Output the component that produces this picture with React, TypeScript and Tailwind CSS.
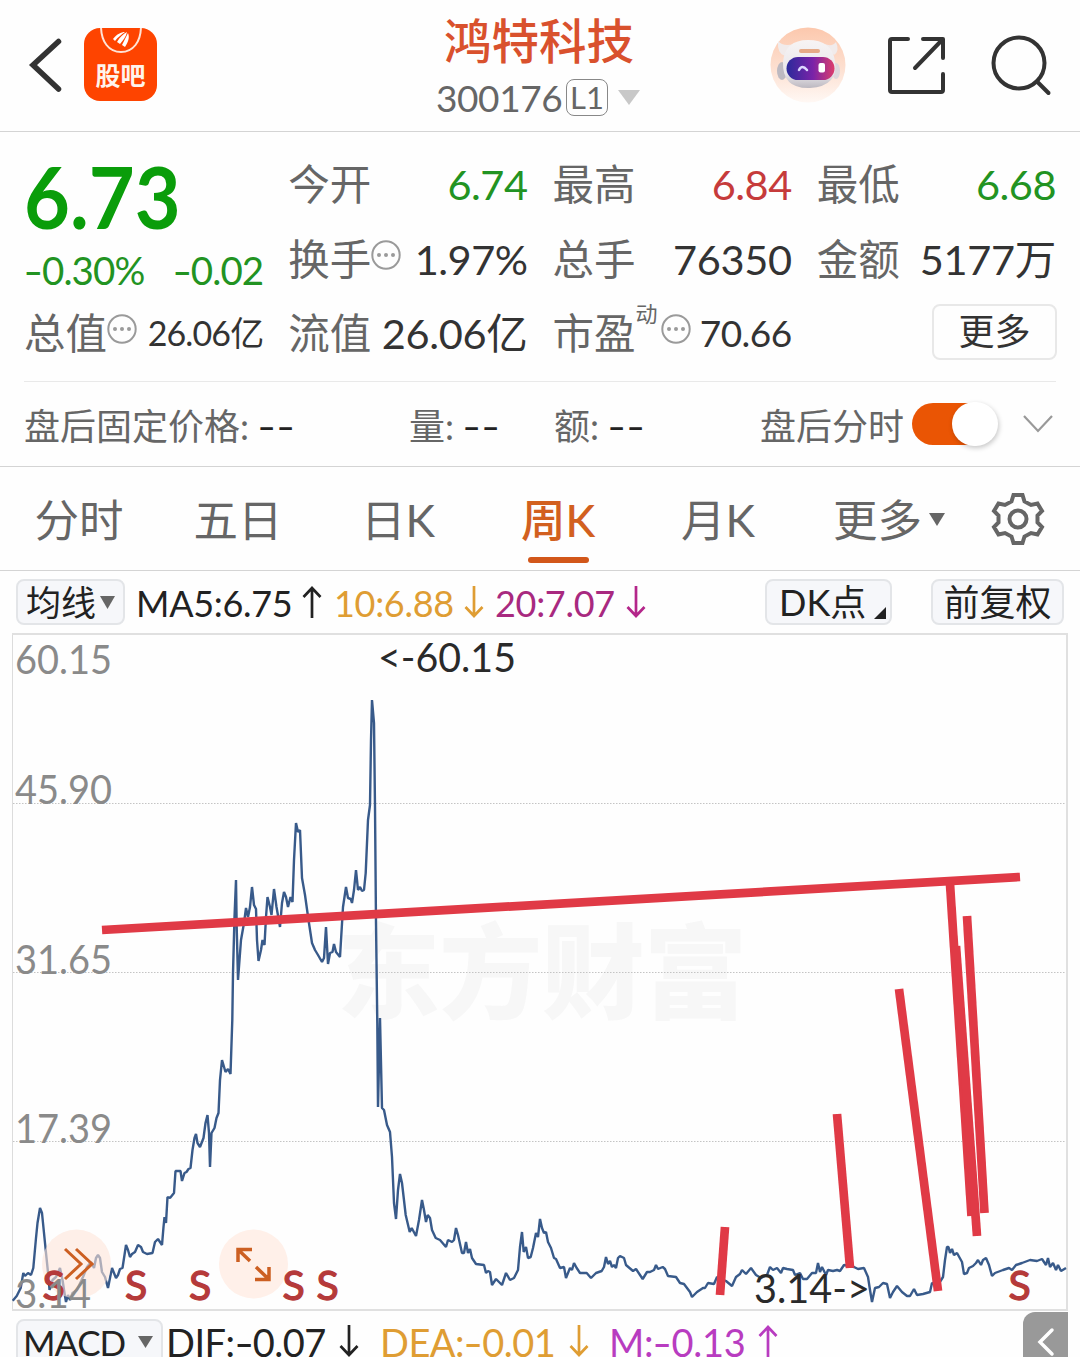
import type { ReactNode } from "react";

const GRAY = "#666666";

const PRICE_LINE =
  "12.7,1300.7 16.7,1296 20.7,1288 23.3,1273 25,1276 28,1273 31,1275 33.3,1268 36,1238 37.5,1223 40,1208 42,1213 44,1233 46,1253 48.5,1277 49.5,1290 52.5,1280 56,1277 60,1268 62.5,1280 64.5,1293 66,1302 68,1295 70,1300 72.5,1293 77,1290 83,1277 87,1267 91,1262 94,1268 96,1258 98,1255 100,1258 102,1272 105,1277 108,1288 110,1278 112,1268 116,1278 118,1275 120,1269 122.5,1268 124.5,1255 126,1245 128,1250 130,1257 132,1254 135,1252 138,1245 141,1247 143,1252 147,1254 152.5,1253 155,1242 158,1239 162,1245 163.5,1227 164.5,1217 166,1223 167.5,1197 170,1198 174,1193 175.5,1171 180.5,1171 182,1181 184.5,1173 186.5,1172 188.5,1169 190.5,1168 192.5,1150 194.5,1138 196,1134 197.5,1143 200,1147 203.5,1138 205.5,1123 207.5,1115 209,1133 210,1167 211.5,1133 214.5,1128 216.5,1118 218.5,1113 220,1080 222,1060 225.5,1072 228,1069 230.5,1074 232.3,1020 " +
  "233,973 234.5,917 236,880 236.7,927 238,980 241,940 244,923 246,908 248,917 250,907 252,887 254,905 256,909 257,940 258.5,961 261,950 262.5,940 264.5,945 266,917 267.5,897 270,907 271.5,915 274,889 276.5,907 280,927 282,903 284,892 286,897 288,907 290.5,897 292.5,902 294,860 296,823 298,832 300,830 302,878 305,895 308.5,920 312,943 315,950 318,955 322,962 324,958 326,927 328,964 330,953 332.5,952 334,944 336,952 340,957 343,907 346,887 348,898 350.7,899 352,903 354,890 356,870 358,890 360,887 362,891 364,890 365.7,873 368,820 370,805 371,740 372,700 374,723 375,807 376,923 377.3,1023 378,1107 380,1018 382,1108 " +
  "384,1110 387,1125 390,1132 392,1157 394,1203 396,1219 398,1190 400,1174 402,1183 405.7,1215 409.7,1232 411.7,1228 416,1236 419,1220 422,1200 424,1210 426,1222 427.7,1215 430,1218 432,1230 435.7,1238 440,1240 446,1247 448,1240 452,1242 454,1240 456,1228 458,1235 462,1253 464,1253 466,1242 468,1253 470,1249 472,1258 476,1264 484,1265 486,1273 488,1271 490,1272 492,1285 496,1279 502,1285 506,1273 510,1280 514,1278 518,1270 520,1247 522,1232 523.7,1252 526,1247 528,1258 530.7,1257 533,1248 536,1233 538,1237 540,1219 542,1228 544,1233 546,1232 548,1242 551,1248 554,1258 556,1259 560,1268 564,1267 566,1278 570,1268 572,1270 574,1263 576.7,1268 580,1273 586.7,1273 591,1278 596,1273 601.7,1271 604,1267 606,1257 608,1264 610,1261 612,1267 614,1265 616,1268 618,1258 620,1256 624,1258 626,1265 633,1271 636,1269 642.7,1279 647,1272 650,1272 654,1270 656,1265 658,1269 662.7,1267 665,1269 668,1276 676,1277 680,1283 684,1284 690,1292 692,1297 697,1292 703,1288 705,1288 708,1283 714,1284 717,1277 " +
  "726,1281 732,1286 736,1277 740,1274 742,1270 746,1274 751,1268 756,1275 761,1278 767,1275 770,1267 773,1270 777,1268 781,1273 783,1268 787,1269 793,1270 795,1275 800,1273 803,1279 807,1279 812,1273 816,1273 818,1263 820,1272 822,1267 826,1275 828,1270 833,1271 837,1270 840,1271 844,1265 854,1267 858,1269 864,1268 868,1277 870,1290 872,1302 875,1288 879,1287 883,1283 887,1284 890,1298 893,1292 897,1286 902,1292 907,1296 910,1296 914,1289 917,1295 923,1294 930,1292 932,1283 938,1285 943,1277 945,1260 947,1247 948.5,1247 950,1253 952,1249 954,1255 957,1253 962,1262 964,1274 967,1273 969,1268 973,1266 976,1263 978,1260 981,1265 983,1260 986,1258 989,1265 992,1276 995,1273 1003,1270 1009,1268 1012,1270 1016,1265 1022,1263 1030,1260 1037,1261 1042,1259 1046,1265 1048,1258 1050,1267 1053,1263 1056,1270 1058,1265 1061,1271 1066,1268";

const trendLines = [
  [102, 930, 1020, 877],
  [950, 884, 971.5, 1216],
  [956, 946, 977, 1236],
  [967, 916, 984.5, 1213],
  [899, 989, 938, 1291],
  [837, 1114, 850, 1268],
  [725, 1227, 720, 1295],
];

const axisLabels = [
  { text: "60.15", y: 674, width: 97 },
  { text: "45.90", y: 804, width: 97 },
  { text: "31.65", y: 974, width: 97 },
  { text: "17.39", y: 1143, width: 97 },
  { text: "3.14", y: 1308, width: 76 },
];

const sellMarks = [53.5, 136, 200, 293.5, 327.5, 1019.5];

const tabs = ["分时", "五日", "日K", "周K", "月K"];

// the minus sign is drawn wider than the font's own hyphen
function Dash() {
  return <span className="mx-[0.06em] inline-block scale-x-[1.4]">-</span>;
}

function More() {
  return (
    <svg className="mb-2 h-[30px] w-[30px] shrink-0" viewBox="0 0 30 30">
      <circle cx="15" cy="15" r="13.7" fill="none" stroke="#9a9a9a" strokeWidth="2" />
      <circle cx="8" cy="15" r="2" fill="#9a9a9a" />
      <circle cx="15" cy="15" r="2" fill="#9a9a9a" />
      <circle cx="22" cy="15" r="2" fill="#9a9a9a" />
    </svg>
  );
}

function Arrow({ up = false, className }: { up?: boolean; className: string }) {
  return (
    <svg
      className={`h-[32px] w-[20px] shrink-0 ${className}`}
      viewBox="0 0 20 32"
      fill="none"
      stroke="currentColor"
      strokeWidth="2.7"
    >
      <path d={up ? "M10 32V2M1.5 11L10 2L18.5 11" : "M10 0V30M1.5 21L10 30L18.5 21"} />
    </svg>
  );
}

function Triangle({ className }: { className: string }) {
  return (
    <svg className={className} viewBox="0 0 10 10" preserveAspectRatio="none">
      <path d="M0 0H10L5 10Z" fill="currentColor" />
    </svg>
  );
}

function Cell({ label, children }: { label: ReactNode; children: ReactNode }) {
  return (
    <div className="flex items-center justify-between whitespace-nowrap">
      <span className="flex items-center text-[41.5px] text-[#666]">{label}</span>
      {children}
    </div>
  );
}

function Header() {
  return (
    <header className="flex h-[132px] items-center border-b border-[#d4d4d4]">
      <svg className="mb-[2px] ml-[28px] h-[60px] w-[36px] shrink-0" viewBox="0 0 36 60" fill="none" stroke="#333" strokeWidth="5.5" strokeLinecap="round">
        <path d="M30.500 6.500L5 30L30.500 54" strokeLinejoin="miter" />
      </svg>
      <div className="mb-[3px] ml-5 flex h-[73px] w-[73px] shrink-0 flex-col items-center overflow-hidden rounded-2xl bg-[#fe4400]">
        <svg className="h-[26px] w-[44px] shrink-0" viewBox="0 0 44 26">
          <path d="M2 -2C2 14 10 24 22 24S42 14 42 -2" fill="none" stroke="#ffe3d5" strokeWidth="2" />
          <path d="M14 11C18 6 22 4 26 4C22 7 19 9 16 13ZM18 14C21 9 24 6 28 4C27 9 24 12 21 16ZM23 17L29 5C31 10 29 14 26 19Z" fill="#fff" />
        </svg>
        <span className="mt-[7px] font-['Noto_Sans_CJK_SC'] text-[25px] leading-[27px] font-bold text-[#fff4ec]">股吧</span>
      </div>
      <div className="ml-[272px] flex w-[220px] shrink-0 flex-col items-center pt-px">
        <h1 className="text-[47.5px] leading-[56px] font-medium text-[#d9512d]">鸿特科技</h1>
        <div className="mt-[7px] flex h-[44px] w-[206px] items-center text-[37px] text-[#666]">
          <span className="w-[128px] tracking-[-0.4px]">300176</span>
          <span className="ml-[2px] flex h-[37px] w-[42px] shrink-0 items-center justify-center rounded-lg border-[1.5px] border-[#888] text-[31px]">L1</span>
          <Triangle className="ml-[10px] h-[15px] w-[22px] text-[#c8c8c8]" />
        </div>
      </div>
      <Robot />
      <svg className="ml-[40px] h-[62px] w-[62px] shrink-0" viewBox="0 0 62 62" fill="none" stroke="#333" strokeWidth="4" strokeLinecap="round" strokeLinejoin="round">
        <path d="M22 4H6Q4 4 4 6V55Q4 57 6 57H55Q57 57 57 55V39M37 4H57V23M56 5L29 33" />
      </svg>
      <svg className="ml-[41px] h-[64px] w-[64px] shrink-0" viewBox="0 0 64 64" fill="none" stroke="#333" strokeWidth="4" strokeLinecap="round">
        <circle cx="30" cy="29" r="25.500" />
        <path d="M48 47.500L59.500 59" />
      </svg>
    </header>
  );
}

function Robot() {
  return (
    <svg className="mb-[2px] ml-[121px] h-[76px] w-[76px] shrink-0" viewBox="0 0 76 76">
      <defs>
        <linearGradient id="halo" x1="0" y1="0" x2="0" y2="1">
          <stop offset="0" stopColor="#fcc8ad" />
          <stop offset="0.550" stopColor="#fde0d1" />
          <stop offset="1" stopColor="#fff8f4" />
        </linearGradient>
        <linearGradient id="visor">
          <stop offset="0" stopColor="#2b2a9b" />
          <stop offset="0.550" stopColor="#7a23a8" />
          <stop offset="1" stopColor="#dc3d6c" />
        </linearGradient>
        <linearGradient id="shell" x1="0" y1="0" x2="0" y2="1">
          <stop offset="0" stopColor="#f7f4f4" />
          <stop offset="0.700" stopColor="#e9e6ea" />
          <stop offset="1" stopColor="#bcb8c0" />
        </linearGradient>
      </defs>
      <circle cx="38" cy="38" r="37.500" fill="url(#halo)" />
      <path d="M8 14Q7 27 15 29L24 17Q13 20 8 14ZM66 15Q70 24 64 28L54 17Q63 20 66 15Z" fill="#f1ebeb" />
      <ellipse cx="12" cy="44" rx="5" ry="9" fill="#bdb9c1" />
      <ellipse cx="66" cy="44" rx="4" ry="8" fill="#ddd7dc" />
      <path d="M13 35Q15 13 38 13Q62 13 65 34Q69 59 40 61Q12 62 13 35Z" fill="url(#shell)" />
      <rect x="29" y="22" width="21" height="4" rx="2" fill="#e5aa87" />
      <rect x="16.500" y="30" width="48" height="23" rx="11.500" fill="url(#visor)" />
      <path d="M29 43Q32 37 37 43" fill="none" stroke="#ddd8ff" strokeWidth="2.500" strokeLinecap="round" />
      <rect x="48.500" y="36" width="6.500" height="9.500" rx="2" fill="#fff" />
    </svg>
  );
}

function Quote() {
  return (
    <section className="mx-6 grid h-[250px] grid-cols-4 grid-rows-[75px_75px_73px] gap-x-[25px] border-b border-[#e9e9e9] pt-[14px] text-[41.5px] leading-[50px] text-[#333]">
      <div className="row-span-2 whitespace-nowrap">
        <div className="origin-left scale-x-[0.91] pt-[7px] text-[87px] leading-[86px] font-bold text-[#0a9d0a]">6.73</div>
        <div className="mt-[6px] flex justify-between text-[38.5px] tracking-[-0.9px] text-[#229322]">
          <span><Dash />0.30%</span>
          <span><Dash />0.02</span>
        </div>
      </div>
      <Cell label="今开"><span className="tracking-[-0.5px] text-[#229322]">6.74</span></Cell>
      <Cell label="最高"><span className="tracking-[-0.5px] text-[#c63b3b]">6.84</span></Cell>
      <Cell label="最低"><span className="tracking-[-0.5px] text-[#229322]">6.68</span></Cell>
      <Cell label={<>换手<More /></>}><span className="tracking-[-0.5px]">1.97%</span></Cell>
      <Cell label="总手"><span className="tracking-[-0.3px]">76350</span></Cell>
      <Cell label="金额"><span className="tracking-[-0.3px]">5177万</span></Cell>
      <Cell label={<>总值<More /></>}><span className="text-[34px] tracking-[-0.9px]">26.06亿</span></Cell>
      <Cell label="流值"><span className="tracking-[-0.3px]">26.06亿</span></Cell>
      <Cell label={<>市盈<span className="mb-[38px] text-[22px] leading-[24px]">动</span><span className="ml-[3px] flex"><More /></span></>}>
        <span className="text-[37px] tracking-[-0.5px]">70.66</span>
      </Cell>
      <button className="mr-[-1px] mb-[2px] flex h-[56px] w-[125px] items-center justify-center self-center justify-self-end rounded-lg border-2 border-[#e8e8e8] pb-px text-[36px]">
        更多
      </button>
    </section>
  );
}

function AfterHours() {
  return (
    <section className="flex h-[85px] items-center border-b border-[#d4d4d4] px-6 text-[36px] whitespace-nowrap text-[#666]">
      <span className="w-[385px] pt-[3px]">盘后固定价格: <b className="font-normal tracking-[1px] text-[#222]"><Dash /><Dash /></b></span>
      <span className="w-[145px] pt-[3px]">量: <b className="font-normal tracking-[1px] text-[#222]"><Dash /><Dash /></b></span>
      <span className="w-[206px] pt-[3px]">额: <b className="font-normal tracking-[1px] text-[#222]"><Dash /><Dash /></b></span>
      <span className="pt-[3px]">盘后分时</span>
      <span className="ml-[8px] flex h-[42px] w-[86px] shrink-0 items-center justify-end rounded-full bg-gradient-to-r from-[#ea5504] from-75% to-transparent to-75%">
        <span className="h-[44px] w-[46px] rounded-full bg-white shadow-[1px_2px_5px_rgba(0,0,0,0.22)]" />
      </span>
      <svg className="ml-[24px] h-[20px] w-[32px] shrink-0" viewBox="0 0 32 20" fill="none" stroke="#999" strokeWidth="2.2">
        <path d="M2 2L16 17L30 2" />
      </svg>
    </section>
  );
}

function Tabs() {
  return (
    <nav className="flex h-[104px] items-center border-b border-[#d4d4d4] text-[44.5px] text-[#666]">
      {tabs.map((tab, i) => (
        <div
          key={tab}
          className={`relative flex h-full items-center justify-center pt-[3px] ${i === 0 ? "w-[158px]" : "w-[160px]"} ${tab === "周K" ? "font-medium text-[#d2601f]" : ""}`}
        >
          {tab}
          {tab === "周K" && <span className="absolute bottom-[7px] h-[6px] w-[61px] rounded-full bg-[#d2571a]" />}
        </div>
      ))}
      <div className="flex w-[182px] items-center justify-center pt-[3px]">
        更多
        <Triangle className="mb-[2px] ml-[7px] h-[13px] w-[16px]" />
      </div>
      <svg className="ml-[11px] h-[54px] w-[54px]" viewBox="0 0 54 54" fill="none" stroke={GRAY} strokeWidth="4" strokeLinejoin="miter">
        <path d="M22.500 3H31.500L33.500 9.500L40 13L46.500 11.500L51 19L46.500 23.500V30.500L51 35L46.500 42.500L40 41L33.500 44.500L31.500 51H22.500L20.500 44.500L14 41L7.500 42.500L3 35L7.500 30.500V23.500L3 19L7.500 11.500L14 13L20.500 9.500Z" />
        <circle cx="27" cy="27" r="8.500" />
      </svg>
    </nav>
  );
}

function Indicators() {
  return (
    <section className="flex h-[62px] items-center pl-4 text-[36px] whitespace-nowrap text-[#222]">
      <button className="flex h-[46px] w-[109px] items-center justify-center rounded-lg border-2 border-[#e3e5e8] bg-[#f6f7fa] text-[35px] leading-none">
        均线
        <Triangle className="ml-1 h-[13px] w-[15px] text-[#666]" />
      </button>
      <span className="ml-[11px] w-[158px] pt-px tracking-[-0.3px]">MA5:6.75</span>
      <Arrow up className="ml-[8px]" />
      <span className="ml-[12px] w-[123px] pt-px tracking-[-0.3px] text-[#df9d33]">10:6.88</span>
      <Arrow className="ml-[7px] text-[#df9d33]" />
      <span className="ml-[11px] w-[123px] pt-px tracking-[-0.3px] text-[#a8297f]">20:7.07</span>
      <Arrow className="ml-[8px] text-[#b4268a]" />
      <button className="relative ml-[119px] flex h-[46px] w-[127px] items-center rounded-lg border-2 border-[#e3e5e8] bg-[#f6f7fa] pl-3 leading-none">
        DK点
        <svg className="absolute right-[4px] bottom-[4px] h-[12px] w-[12px]" viewBox="0 0 12 12">
          <path d="M12 0V12H0Z" fill="#222" />
        </svg>
      </button>
      <button className="ml-[39px] flex h-[46px] w-[133px] items-center justify-center rounded-lg border-2 border-[#e3e5e8] bg-[#f6f7fa] leading-none">
        前复权
      </button>
    </section>
  );
}

function Chart() {
  return (
    <svg className="block h-[678px] w-full shrink-0" viewBox="0 633 1080 678">
      <text x="337" y="1011" fontSize="103" fontWeight="900" fill="#f7f7f7" textLength="410">东方财富</text>
      <g stroke="#c4c4c4" strokeWidth="1" strokeDasharray="1.5 1.5">
        <path d="M13 803.500H1067M13 972.500H1067M13 1141.500H1067" />
      </g>
      <path d="M12.500 634V1310" stroke="#dcdcdc" />
      <path d="M12 634H1067V1310H12" fill="none" stroke="#e0e0e0" strokeWidth="2" />
      <polyline points={PRICE_LINE} fill="none" stroke="#385a8a" strokeWidth="2.4" strokeLinejoin="bevel" />
      <circle cx="76.500" cy="1264" r="34.500" fill="#fde5d9" fillOpacity="0.6" />
      <circle cx="253.500" cy="1264" r="34.500" fill="#fff0e9" />
      <g fill="#b53a3a" fontSize="41" textAnchor="middle">
        {sellMarks.map((x) => (
          <text key={x} x={x} y="1300" stroke="#b53a3a" strokeWidth="1.3">S</text>
        ))}
      </g>
      <g fill="none" stroke="#cc5f22" strokeWidth="3">
        <path d="M65 1249L81 1264L65 1279M76 1249L92 1264L76 1279" />
        <path d="M238 1262V1249.500H252M238.500 1250L250 1261M269 1267V1279.500H255M268.500 1279L256 1267" strokeWidth="3.500" />
      </g>
      <g fill="#8a8a8a" fontSize="41">
        {axisLabels.map((l) => (
          <text key={l.text} x="15" y={l.y} textLength={l.width} lengthAdjust="spacingAndGlyphs">{l.text}</text>
        ))}
      </g>
      <g fill="#2a2a2a" fontSize="40">
        <text x="378" y="672" textLength="138" lengthAdjust="spacingAndGlyphs">&lt;-60.15</text>
        <text x="754" y="1303" textLength="116" lengthAdjust="spacingAndGlyphs">3.14-&gt;</text>
      </g>
      <g stroke="#e03a46" strokeWidth="8.700">
        {trendLines.map(([x1, y1, x2, y2]) => (
          <line key={`${x1}-${y1}`} x1={x1} y1={y1} x2={x2} y2={y2} />
        ))}
      </g>
    </svg>
  );
}

function Macd() {
  return (
    <section className="flex h-[46px] items-start overflow-hidden pl-4 text-[38px] leading-[46px] whitespace-nowrap text-[#222]">
      <button className="mt-[8px] flex h-[46px] w-[147px] shrink-0 items-center rounded-lg border-2 border-[#e3e5e8] bg-[#f6f7fa] pl-[5px] text-[35px] tracking-[-1px]">
        MACD
        <Triangle className="ml-[13px] h-[12px] w-[15px] shrink-0 text-[#666]" />
      </button>
      <span className="mt-[8px] ml-[3px] w-[168px] tracking-[-0.5px]">DIF:<Dash />0.07</span>
      <Arrow className="mt-[14px] ml-[5px]" />
      <span className="mt-[8px] ml-[21px] w-[180px] tracking-[-0.5px] text-[#df9d33]">DEA:<Dash />0.01</span>
      <Arrow className="mt-[14px] ml-[9px] text-[#df9d33]" />
      <span className="mt-[8px] ml-[20px] w-[140px] tracking-[-0.3px] text-[#b83cc0]">M:<Dash />0.13</span>
      <Arrow up className="mt-[14px] ml-[9px] text-[#b83cc0]" />
      <div className="mt-px ml-auto mr-3 flex h-[60px] w-[45px] shrink-0 justify-center rounded-tl-xl bg-[#999] pt-[15px]">
        <svg className="h-[30px] w-[18px]" viewBox="0 0 18 30" fill="none" stroke="#fff" strokeWidth="3.500" strokeLinecap="round">
          <path d="M15 3L3 15L15 27" />
        </svg>
      </div>
    </section>
  );
}

export default function App() {
  return (
    <main className="flex h-[1357px] w-[1080px] flex-col overflow-hidden bg-[#fefefe] font-[Lato,'Noto_Sans_CJK_SC',sans-serif] [font-kerning:none]">
      <Header />
      <Quote />
      <AfterHours />
      <Tabs />
      <Indicators />
      <Chart />
      <Macd />
    </main>
  );
}
